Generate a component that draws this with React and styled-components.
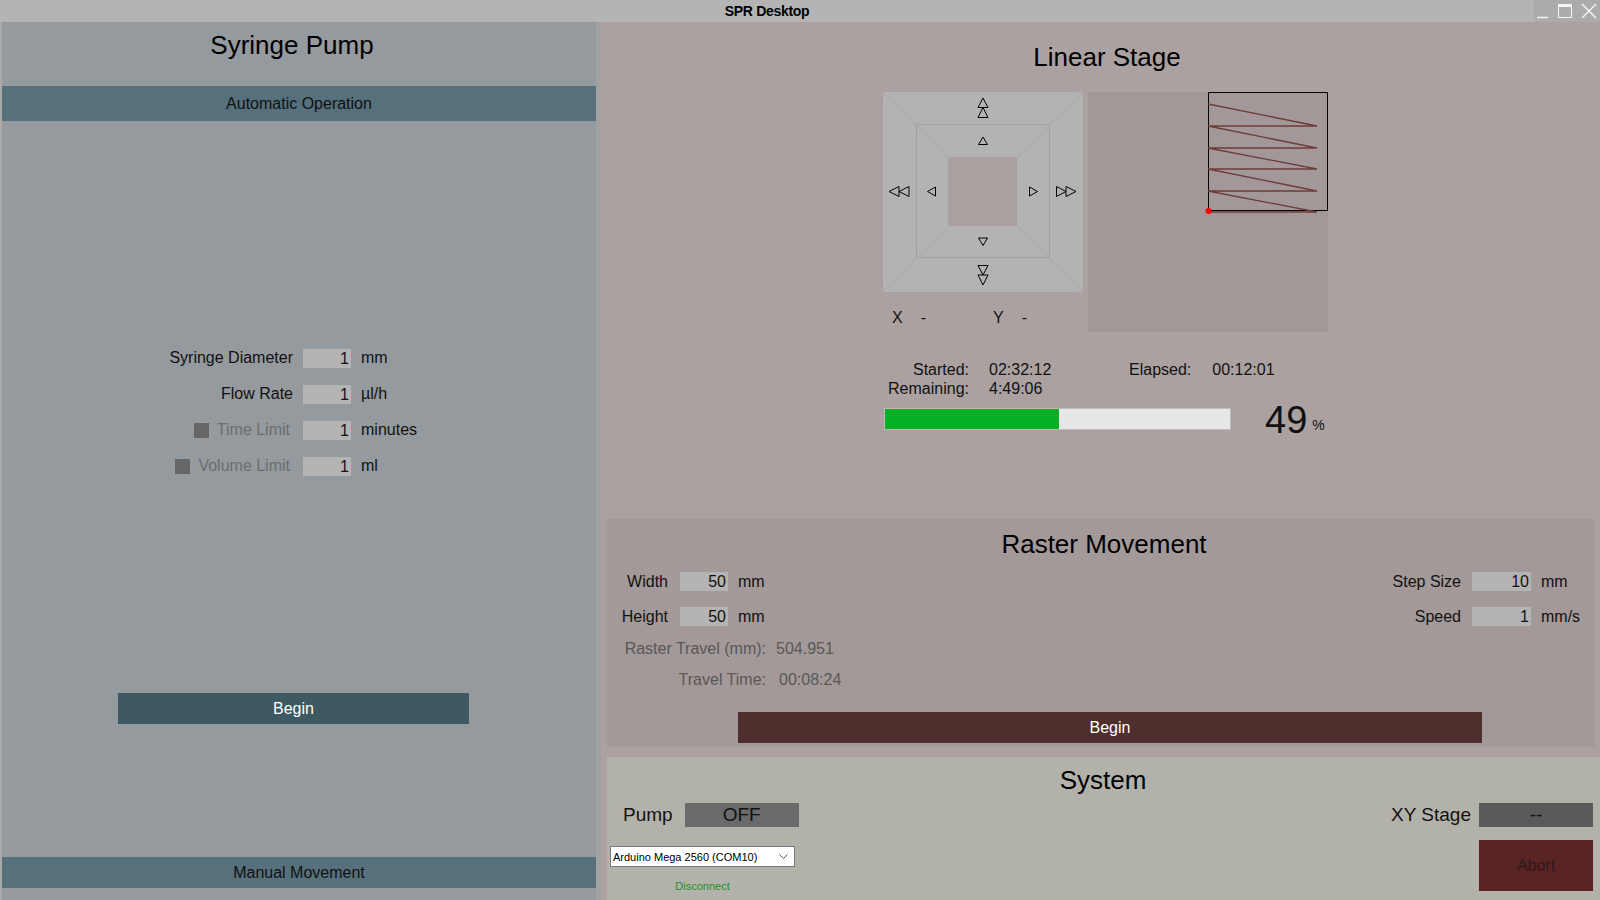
import styled, { createGlobalStyle } from "styled-components";

const GlobalStyle = createGlobalStyle`
  body {
    margin: 0;
    overflow: hidden;
    font-family: "Liberation Sans", Arial, sans-serif;
    color: #000;
  }
`;

const Window = styled.div`
  width: 1600px;
  height: 900px;
  display: flex;
  flex-direction: column;
`;

const TitleBar = styled.div`
  height: 22px;
  flex-shrink: 0;
  display: flex;
  background: #b4b4b4;
`;

const TitleText = styled.div`
  flex: 1;
  text-align: center;
  font-size: 14px;
  font-weight: 700;
  line-height: 22px;
  letter-spacing: -0.3px;
`;

const Controls = styled.div`
  width: 66px;
  background: #ababab;
  display: flex;
  align-items: center;
`;

const Main = styled.div`
  flex: 1;
  display: flex;
  min-height: 0;
`;

/* ---------- syringe pump ---------- */

const LeftPanel = styled.section`
  width: 596px;
  box-sizing: border-box;
  border-left: 2px solid #a9a9a9;
  background: #959a9e;
  display: flex;
  flex-direction: column;
`;

const Divider = styled.div`
  width: 5px;
  background: #a0a1a3;
`;

const Heading = styled.h1`
  margin: 0;
  font-size: 26px;
  font-weight: 400;
  line-height: 30px;
  text-align: center;
  padding: ${(p) => p.$pad || "0"};
`;

const SectionBar = styled.div`
  height: ${(p) => p.$h}px;
  line-height: ${(p) => p.$h}px;
  background: #56707c;
  text-align: center;
  font-size: 16px;
  color: #111;
  margin: ${(p) => p.$m || "0"};
`;

const PumpForm = styled.div`
  margin-top: 219px;
  display: grid;
  grid-template-columns: 291px 48px auto;
  grid-auto-rows: 36px;
  column-gap: 10px;
  align-items: center;
`;

const FieldLabel = styled.label`
  display: flex;
  justify-content: flex-end;
  align-items: center;
  gap: 8px;
  font-size: 16px;
  color: ${(p) => (p.$muted ? "#6d6d6d" : "#111")};
  padding-right: ${(p) => (p.$muted ? 3 : 0)}px;
`;

const CheckBox = styled.span`
  width: 15px;
  height: 15px;
  background: #666;
`;

const NumberBox = styled.div`
  width: ${(p) => p.$w}px;
  height: 19px;
  box-sizing: border-box;
  background: #b4b4b4;
  text-align: right;
  padding-right: 2px;
  font-size: 16px;
  line-height: 19px;
  color: #111;
`;

const Unit = styled.span`
  font-size: 16px;
  color: #111;
  padding-left: ${(p) => p.$pad || 0}px;
`;

const ActionButton = styled.button`
  display: block;
  border: 0;
  padding: 0;
  font-family: inherit;
  font-size: 16px;
  color: #fff;
  background: ${(p) => p.$bg};
  width: ${(p) => p.$w}px;
  height: 31px;
  margin: ${(p) => p.$m};
`;

/* ---------- linear stage ---------- */

const RightPanel = styled.section`
  flex: 1;
  background: #aba1a1;
  display: flex;
  flex-direction: column;
`;

const StageSection = styled.div`
  height: 497px;
  flex-shrink: 0;
`;

const StageRow = styled.div`
  margin: 20px 0 0 282px;
  display: flex;
  gap: 5px;
  align-items: flex-start;
`;

const JogColumn = styled.div`
  width: 200px;
  display: flex;
  flex-direction: column;
`;

const XYRow = styled.div`
  margin-top: 16px;
  padding-left: 9px;
  display: flex;
  font-size: 16px;
  line-height: 19px;
  color: #111;
`;

const Coord = styled.div`
  width: ${(p) => p.$w || "auto"};
  display: flex;
  gap: 18px;
`;

const StatusGrid = styled.div`
  margin: 28px 0 0 283px;
  display: grid;
  grid-template-columns: 85px 160px max-content max-content;
  justify-content: start;
  grid-auto-rows: 19px;
  font-size: 16px;
  line-height: 19px;
  color: #111;
`;

const StatusLabel = styled.span`
  text-align: right;
`;

const StatusValue = styled.span`
  padding-left: ${(p) => p.$pad}px;
`;

const ProgressRow = styled.div`
  margin: 2px 0 0 283px;
  display: flex;
  align-items: center;
  height: 38px;
`;

const ProgressTrack = styled.div`
  width: 347px;
  height: 22px;
  box-sizing: border-box;
  border: 1px solid #bcbcbc;
  background: #e6e6e6;
`;

const ProgressFill = styled.div`
  height: 100%;
  background: #06b025;
`;

const Percent = styled.div`
  margin: 7px 0 0 34px;
  font-size: 38px;
  line-height: 38px;
  color: #111;
  small {
    font-size: 14px;
    margin-left: 5px;
    vertical-align: 3px;
  }
`;

/* ---------- raster movement ---------- */

const RasterPanel = styled.div`
  height: 228px;
  flex-shrink: 0;
  margin: 0 5px 0 6px;
  background: #a39999;
  display: flex;
  flex-direction: column;
`;

const FieldsRow = styled.div`
  margin-top: 13px;
  display: flex;
  justify-content: space-between;
`;

const FieldGrid = styled.div`
  display: grid;
  grid-template-columns: ${(p) => p.$cols};
  grid-auto-rows: 19px;
  row-gap: 16px;
  align-items: center;
`;

const RowLabel = styled.span`
  text-align: right;
  font-size: 16px;
  color: #111;
  padding-right: ${(p) => p.$pad}px;
`;

const InfoGrid = styled.div`
  margin-top: 13px;
  display: grid;
  grid-template-columns: 159px auto;
  grid-auto-rows: 19px;
  row-gap: 12px;
  font-size: 16px;
  line-height: 19px;
  color: #585858;
`;

/* ---------- system ---------- */

const SystemPanel = styled.div`
  flex: 1;
  margin: 10px 0 0 6px;
  padding: 8px 7px 0 0;
  background: #b3b2aa;
  display: flex;
  flex-direction: column;
`;

const IndicatorRow = styled.div`
  margin-top: 8px;
  padding-left: 16px;
  display: flex;
  justify-content: space-between;
  align-items: center;
`;

const Indicator = styled.div`
  display: flex;
  align-items: center;
  gap: ${(p) => p.$gap}px;
  font-size: 19px;
  color: #111;
`;

const IndicatorBox = styled.div`
  width: 114px;
  height: 24px;
  line-height: 24px;
  text-align: center;
  background: ${(p) => p.$bg};
`;

const BottomRow = styled.div`
  margin-top: 13px;
  padding-left: 3px;
  display: flex;
  justify-content: space-between;
  align-items: flex-start;
`;

const PortColumn = styled.div`
  width: 185px;
  margin-top: 6px;
  display: flex;
  flex-direction: column;
  align-items: center;
`;

const PortSelect = styled.div`
  width: 185px;
  height: 21px;
  box-sizing: border-box;
  border: 1px solid #7a7a7a;
  background: #fff;
  padding: 0 6px 0 2px;
  display: flex;
  align-items: center;
  justify-content: space-between;
  font-size: 11px;
`;

const DisconnectLink = styled.span`
  margin-top: 13px;
  font-size: 11px;
  line-height: 13px;
  color: #23902a;
`;

const AbortButton = styled.button`
  width: 114px;
  height: 51px;
  border: 0;
  padding: 0;
  background: #5a2222;
  color: #2b1c1c;
  font-family: inherit;
  font-size: 16px;
`;

/* ---------- drawings ---------- */

const tri = (pts) => pts.map((p) => p.join(",")).join(" ");

const JogPad = () => (
  <svg width="200" height="200" viewBox="0 0 200 200">
    <rect x="0" y="0" width="200" height="200" fill="#b3b3b3" />
    <g stroke="#a3a3a3" strokeWidth="1">
      <line x1="0" y1="0" x2="66" y2="66" />
      <line x1="200" y1="0" x2="134" y2="66" />
      <line x1="0" y1="200" x2="66" y2="134" />
      <line x1="200" y1="200" x2="134" y2="134" />
    </g>
    <rect x="33.5" y="32.5" width="133" height="133" fill="none" stroke="#a89f9f" />
    <rect x="65" y="65" width="69" height="69" fill="#aba1a1" />
    <g fill="none" stroke="#000" strokeWidth="1">
      <polygon points={tri([[100, 6], [95, 15.5], [105, 15.5]])} />
      <polygon points={tri([[100, 15.5], [95, 25.5], [105, 25.5]])} />
      <polygon points={tri([[100, 45], [95.5, 52.5], [104.5, 52.5]])} />
      <polygon points={tri([[100, 153.5], [95.5, 146], [104.5, 146]])} />
      <polygon points={tri([[100, 183], [95, 173.5], [105, 173.5]])} />
      <polygon points={tri([[100, 193], [95, 183], [105, 183]])} />
      <polygon points={tri([[6, 99.5], [16, 94.5], [16, 104.5]])} />
      <polygon points={tri([[16, 99.5], [26, 94.5], [26, 104.5]])} />
      <polygon points={tri([[44.5, 99.5], [52.5, 95], [52.5, 104]])} />
      <polygon points={tri([[154.5, 99.5], [146.5, 95], [146.5, 104]])} />
      <polygon points={tri([[183, 99.5], [173.5, 94.5], [173.5, 104.5]])} />
      <polygon points={tri([[193, 99.5], [183, 94.5], [183, 104.5]])} />
    </g>
  </svg>
);

const RasterPreview = () => (
  <svg width="240" height="240" viewBox="0 0 240 240">
    <rect x="0" y="0" width="240" height="240" fill="#a29898" />
    <rect x="120.5" y="0.5" width="119" height="118" fill="none" stroke="#000" />
    <polyline
      fill="none"
      stroke="#6e3b3b"
      strokeWidth="1.3"
      points="120,12 229,34 120,34 229,56 120,56 229,77 120,77 229,99 120,99 229,120 120,120"
    />
    <circle cx="120.5" cy="119" r="3" fill="#ff0000" />
  </svg>
);

const WindowIcons = () => (
  <svg width="66" height="22" viewBox="0 0 66 22">
    <g stroke="#f5f5f5" fill="none">
      <line x1="3" y1="17.5" x2="14" y2="17.5" strokeWidth="1.5" />
      <rect x="24.5" y="4.5" width="13" height="13" />
      <line x1="24.5" y1="6" x2="37.5" y2="6" strokeWidth="2" />
      <line x1="48" y1="4" x2="62" y2="18" strokeWidth="1.5" />
      <line x1="62" y1="4" x2="48" y2="18" strokeWidth="1.5" />
    </g>
  </svg>
);

const Chevron = () => (
  <svg width="9" height="6" viewBox="0 0 9 6">
    <polyline points="0.5,0.5 4.5,4.5 8.5,0.5" fill="none" stroke="#555" />
  </svg>
);

const pumpFields = [
  { label: "Syringe Diameter", value: "1", unit: "mm" },
  { label: "Flow Rate", value: "1", unit: "µl/h" },
  { label: "Time Limit", value: "1", unit: "minutes", check: true },
  { label: "Volume Limit", value: "1", unit: "ml", check: true },
];

const progress = { shown: 49, fill: 50.5 };

const App = () => {
  return (
    <Window>
      <GlobalStyle />
      <TitleBar>
        <TitleText>SPR Desktop</TitleText>
        <Controls>
          <WindowIcons />
        </Controls>
      </TitleBar>
      <Main>
        <LeftPanel>
          <Heading $pad="8px 14px 26px 0">Syringe Pump</Heading>
          <SectionBar $h={35}>Automatic Operation</SectionBar>
          <PumpForm>
            {pumpFields.map((f) => [
              <FieldLabel key={f.label + "l"} $muted={f.check}>
                {f.check && <CheckBox />}
                {f.label}
              </FieldLabel>,
              <NumberBox key={f.label + "v"} $w={48}>
                {f.value}
              </NumberBox>,
              <Unit key={f.label + "u"}>{f.unit}</Unit>,
            ])}
          </PumpForm>
          <ActionButton $bg="#3e5961" $w={351} $m="209px 0 0 116px">
            Begin
          </ActionButton>
          <SectionBar $h={31} $m="auto 0 12px 0">
            Manual Movement
          </SectionBar>
        </LeftPanel>
        <Divider />
        <RightPanel>
          <StageSection>
            <Heading $pad="20px 0 0 13px">Linear Stage</Heading>
            <StageRow>
              <JogColumn>
                <JogPad />
                <XYRow>
                  <Coord $w="101px">
                    <span>X</span>
                    <span>-</span>
                  </Coord>
                  <Coord>
                    <span>Y</span>
                    <span>-</span>
                  </Coord>
                </XYRow>
              </JogColumn>
              <RasterPreview />
            </StageRow>
            <StatusGrid>
              <StatusLabel>Started:</StatusLabel>
              <StatusValue $pad={20}>02:32:12</StatusValue>
              <span>Elapsed:</span>
              <StatusValue $pad={21}>00:12:01</StatusValue>
              <StatusLabel>Remaining:</StatusLabel>
              <StatusValue $pad={20}>4:49:06</StatusValue>
            </StatusGrid>
            <ProgressRow>
              <ProgressTrack>
                <ProgressFill style={{ width: `${progress.fill}%` }} />
              </ProgressTrack>
              <Percent>
                {progress.shown}
                <small>%</small>
              </Percent>
            </ProgressRow>
          </StageSection>

          <RasterPanel>
            <Heading $pad="10px 0 0 6px">Raster Movement</Heading>
            <FieldsRow>
              <FieldGrid $cols="73px 48px auto">
                <RowLabel $pad={12}>Width</RowLabel>
                <NumberBox $w={48}>50</NumberBox>
                <Unit $pad={10}>mm</Unit>
                <RowLabel $pad={12}>Height</RowLabel>
                <NumberBox $w={48}>50</NumberBox>
                <Unit $pad={10}>mm</Unit>
              </FieldGrid>
              <FieldGrid $cols="auto 59px 64px">
                <RowLabel $pad={11}>Step Size</RowLabel>
                <NumberBox $w={59}>10</NumberBox>
                <Unit $pad={10}>mm</Unit>
                <RowLabel $pad={11}>Speed</RowLabel>
                <NumberBox $w={59}>1</NumberBox>
                <Unit $pad={10}>mm/s</Unit>
              </FieldGrid>
            </FieldsRow>
            <InfoGrid>
              <StatusLabel>Raster Travel (mm):</StatusLabel>
              <StatusValue $pad={10}>504.951</StatusValue>
              <StatusLabel>Travel Time:</StatusLabel>
              <StatusValue $pad={13}>00:08:24</StatusValue>
            </InfoGrid>
            <ActionButton $bg="#4f2e2e" $w={744} $m="23px 0 0 131px">
              Begin
            </ActionButton>
          </RasterPanel>

          <SystemPanel>
            <Heading $pad="0 0 0 6px">System</Heading>
            <IndicatorRow>
              <Indicator $gap={12}>
                Pump
                <IndicatorBox $bg="#6a6a6a">OFF</IndicatorBox>
              </Indicator>
              <Indicator $gap={8}>
                XY Stage
                <IndicatorBox $bg="#5a5a5a">--</IndicatorBox>
              </Indicator>
            </IndicatorRow>
            <BottomRow>
              <PortColumn>
                <PortSelect>
                  <span>Arduino Mega 2560 (COM10)</span>
                  <Chevron />
                </PortSelect>
                <DisconnectLink>Disconnect</DisconnectLink>
              </PortColumn>
              <AbortButton>Abort</AbortButton>
            </BottomRow>
          </SystemPanel>
        </RightPanel>
      </Main>
    </Window>
  );
};

export default App;
